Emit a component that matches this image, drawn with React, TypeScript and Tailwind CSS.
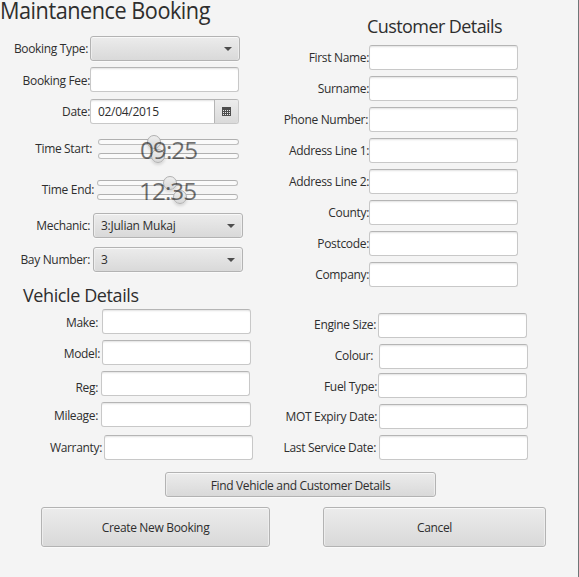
import React from "react";

const fieldBase =
  "h-[25px] shrink-0 rounded-[3px] border border-[#c8c8c8] border-t-[#b5b5b5] bg-white shadow-[inset_0_2px_2px_-1px_#e2e2e2]";
const raised =
  "border border-[#b3b3b3] bg-linear-to-b from-[#ececec] to-[#d9d9d9] shadow-[inset_0_1px_0_#f8f8f8,inset_1px_0_0_#ededed,inset_-1px_0_0_#ededed,0_1px_0_#fafafa]";

type RowProps = {
  label: string;
  row?: string;
  labelClass: string;
  children?: React.ReactNode;
};

function Row({ label, row = "", labelClass, children }: RowProps) {
  return (
    <div className={`flex h-[25px] shrink-0 items-start ${row}`}>
      <div className={`shrink-0 whitespace-nowrap text-right leading-4 ${labelClass}`}>{label}</div>
      {children}
    </div>
  );
}

function Field({ className = "w-[149px]" }: { className?: string }) {
  return <div className={`${fieldBase} ${className}`} />;
}

function Combo({ value = "", className = "" }: { value?: string; className?: string }) {
  return (
    <div
      className={`flex h-[25px] w-[150px] shrink-0 items-center justify-between rounded-[3px] pr-[7px] pl-[7px] ${raised} ${className}`}
    >
      <span className="whitespace-nowrap leading-4 tracking-[-0.25px]">{value}</span>
      <svg width="8" height="4" viewBox="0 0 8 4">
        <path d="M0 0H8L4 4Z" fill="#4d4d4d" />
      </svg>
    </div>
  );
}

function DatePicker() {
  return (
    <div className={`flex w-[149px] overflow-hidden ${fieldBase} border-[#b5b5b5]`}>
      <span className="flex-1 pt-[4px] pl-[7px] leading-4 tracking-[-0.3px]">02/04/2015</span>
      <div className="flex h-[23px] w-[24px] items-center justify-center border-l border-[#b5b5b5] bg-linear-to-b from-[#ececec] to-[#dadada]">
        <svg width="9" height="9" viewBox="0 0 9 9" shapeRendering="crispEdges">
          <path d="M0 0H9V9H0Z" fill="#4d4d4d" />
          <path
            d="M1 3h1v1H1zM3 3h1v1H3zM5 3h1v1H5zM7 3h1v1H7zM1 5h1v1H1zM3 5h1v1H3zM5 5h1v1H5zM7 5h1v1H7zM1 7h1v1H1zM3 7h1v1H3zM5 7h1v1H5zM7 7h1v1H7z"
            fill="#e8e8e8"
          />
        </svg>
      </div>
    </div>
  );
}

function Track({ thumb }: { thumb: string }) {
  return (
    <div className="relative h-[6px] rounded-full border border-[#bdbdbd] border-t-[#b0b0b0] bg-[#fafafa]">
      <div
        className={`absolute -top-[5px] size-[14px] rounded-full border border-[#b0b0b0] bg-linear-to-b from-[#eeeeee] to-[#d8d8d8] shadow-[0_2px_3px_#00000020] ${thumb}`}
      />
    </div>
  );
}

function TimeSlider({
  time,
  first,
  second,
  className,
}: {
  time: string;
  first: string;
  second: string;
  className: string;
}) {
  return (
    <div className={`relative flex w-[141px] shrink-0 flex-col gap-[8px] ${className}`}>
      <Track thumb={first} />
      <Track thumb={second} />
      <span className="absolute top-[-4px] left-[42px] text-[24px] leading-[30px] tracking-[-1.4px] text-[#000000] opacity-55">
        <span className="inline-block origin-left scale-x-[1.01] tracking-[-0.9px]">{time}</span>
      </span>
    </div>
  );
}

function Button({ children, className }: { children: React.ReactNode; className: string }) {
  return (
    <button
      className={`flex shrink-0 items-center justify-center rounded-[3px] pt-[2px] whitespace-nowrap leading-4 ${raised} ${className}`}
    >
      {children}
    </button>
  );
}

const customerRows = [
  ["First Name:", "w-[369px]"],
  ["Surname:", "w-[369px]"],
  ["Phone Number:", "w-[368px] mr-px"],
  ["Address Line 1:", "w-[369px]"],
  ["Address Line 2:", "w-[369px]"],
  ["County:", "w-[369px]"],
  ["Postcode:", "w-[369px]"],
  ["Company:", "w-[369px]"],
];

export default function App() {
  return (
    <div className="flex h-[577px] w-[579px] flex-col overflow-hidden border-r border-[#6f7677] bg-[#f4f4f4] font-['Open_Sans','Noto_Sans',sans-serif] text-[12px] tracking-[-0.33px] text-[#2e2e2e]">
      <div className="flex h-[472px] shrink-0">
        <div className="flex w-[270px] shrink-0 flex-col">
          <h1 className="h-[36px] w-[240px] origin-left scale-x-[0.942] whitespace-nowrap text-[23px] leading-[21px] tracking-[-0.5px]">
            Maintanence Booking
          </h1>
          <Row label="Booking Type:" labelClass="w-[88px] pt-[5px] mr-[2px]">
            <Combo />
          </Row>
          <Row label="Booking Fee:" row="mt-[6px]" labelClass="w-[90px] pt-[6px]">
            <Field />
          </Row>
          <Row label="Date:" row="mt-[7px]" labelClass="w-[90px] pt-[5px]">
            <DatePicker />
          </Row>
          <Row label="Time Start:" row="mt-[15px]" labelClass="w-[92px] pt-[2px] mr-[6px]">
            <TimeSlider time="09:25" first="left-[48px]" second="left-[52px]" className="" />
          </Row>
          <Row label="Time End:" row="mt-[16px]" labelClass="w-[94px] pt-[2px] mr-[3px]">
            <TimeSlider time="12:35" first="left-[65px]" second="left-[75px]" className="" />
          </Row>
          <Row label="Mechanic:" row="mt-[8px]" labelClass="w-[90px] pt-[5px] mr-[3px]">
            <Combo value="3:Julian Mukaj" />
          </Row>
          <Row label="Bay Number:" row="mt-[9px]" labelClass="w-[90px] pt-[5px] mr-[3px]">
            <Combo value="3" />
          </Row>
          <h2 className="h-[37px] shrink-0 pt-[11px] pl-[23px] text-[18px] leading-6 tracking-[-0.4px]">
            Vehicle Details
          </h2>
          <Row label="Make:" labelClass="w-[98px] pt-[6px] mr-[4px]">
            <Field />
          </Row>
          <Row label="Model:" row="mt-[6px]" labelClass="w-[100px] pt-[6px] mr-[2px]">
            <Field />
          </Row>
          <Row label="Reg:" row="mt-[6px]" labelClass="w-[98px] pt-[9px] mr-[3px]">
            <Field />
          </Row>
          <Row label="Mileage:" row="mt-[6px]" labelClass="w-[98px] pt-[6px] mr-[3px]">
            <Field className="w-[150px]" />
          </Row>
          <Row label="Warranty:" row="mt-[8px]" labelClass="w-[102px] pt-[5px] mr-[2px]">
            <Field />
          </Row>
        </div>
        <div className="-ml-[270px] flex flex-col">
          <h2 className="h-[45px] shrink-0 pt-[14px] pl-[367px] text-[18px] leading-6 tracking-[-0.58px]">
            Customer Details
          </h2>
          <div className="flex flex-col gap-[6px]">
            {customerRows.map(([label, cls]) => (
              <Row key={label} label={label} labelClass={`pt-[5px] ${cls}`}>
                <Field />
              </Row>
            ))}
          </div>
          <Row label="Engine Size:" row="mt-[26px]" labelClass="w-[376px] pt-[4px] mr-[2px]">
            <Field />
          </Row>
          <Row label="Colour:" row="mt-[6px]" labelClass="w-[373px] pt-[4px] mr-[6px]">
            <Field />
          </Row>
          <Row label="Fuel Type:" row="mt-[4px]" labelClass="w-[377px] pt-[6px] mr-px">
            <Field />
          </Row>
          <Row label="MOT Expiry Date:" row="mt-[6px]" labelClass="w-[377px] pt-[5px] mr-[2px]">
            <Field />
          </Row>
          <Row label="Last Service Date:" row="mt-[6px]" labelClass="w-[376px] pt-[5px] mr-[3px]">
            <Field />
          </Row>
        </div>
      </div>
      <Button className="ml-[165px] h-[25px] w-[271px]">Find Vehicle and Customer Details</Button>
      <div className="mt-[10px] ml-[41px] flex gap-[53px]">
        <Button className="h-[40px] w-[229px]">Create New Booking</Button>
        <Button className="h-[40px] w-[223px]">Cancel</Button>
      </div>
    </div>
  );
}
